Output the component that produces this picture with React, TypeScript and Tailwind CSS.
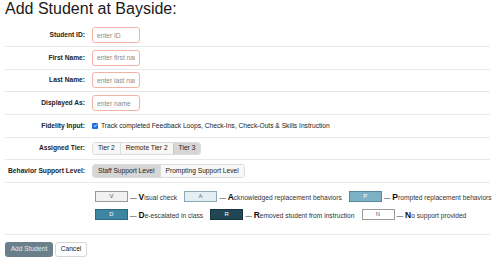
import React from 'react';

const rows = [
  { label: 'Student ID:', placeholder: 'enter ID' },
  { label: 'First Name:', placeholder: 'enter first name' },
  { label: 'Last Name:', placeholder: 'enter last name' },
  { label: 'Displayed As:', placeholder: 'enter name' },
];

const legend = [
  [
    { key: 'V', rest: 'isual check', box: 'bg-[#f1f1f1] border-[#9a9a9a] text-[#555]' },
    { key: 'A', rest: 'cknowledged replacement behaviors', box: 'bg-[#e4eff4] border-[#8ea9b5] text-[#4d7585]' },
    { key: 'P', rest: 'rompted replacement behaviors', box: 'bg-[#7db2c6] border-[#55889c] text-white' },
  ],
  [
    { key: 'D', rest: 'e-escalated in class', box: 'bg-[#3e85a2] border-[#2b6880] text-white' },
    { key: 'R', rest: 'emoved student from instruction', box: 'bg-[#214654] border-[#16323d] text-white' },
    { key: 'N', rest: 'o support provided', box: 'bg-white border-[#9a9a9a] text-[#666]' },
  ],
];

function Row({ label, children }: { label: string; children?: React.ReactNode }) {
  return (
    <div className="flex items-center h-[22.67px] border-b border-[#e8e8e8]">
      <div className="w-[87px] pr-[7px] text-right font-bold text-[#222]">{label}</div>
      <div className="flex items-center">{children}</div>
    </div>
  );
}

export default function App() {
  return (
    <div className="w-[495px] h-[260px] bg-white overflow-hidden font-['Liberation_Sans',Arial,sans-serif] text-[6.67px] text-[#222]">
      <div className="px-[5px]">
        <h1 className="h-[24.33px] pt-[1px] text-[16px] leading-[16px] text-[#1a1a1a]">Add Student at Bayside:</h1>

        {rows.map((r) => (
          <Row key={r.label} label={r.label}>
            <input
              placeholder={r.placeholder}
              className="w-[48px] h-[16px] px-[4px] border border-[#f3b3a4] rounded-[3px] text-[6.67px] outline-none placeholder:text-[#8a8a8a]"
            />
          </Row>
        ))}

        <Row label="Fidelity Input:">
          <span className="w-[6px] h-[6px] rounded-[1px] bg-[#1b6fe0] flex items-center justify-center">
            <svg viewBox="0 0 10 10" className="w-[5px] h-[5px]">
              <path d="M2 5.2 L4.2 7.3 L8 2.8" stroke="white" strokeWidth="1.8" fill="none" />
            </svg>
          </span>
          <span className="ml-[3px]">Track completed Feedback Loops, Check-Ins, Check-Outs &amp; Skills Instruction</span>
        </Row>

        <Row label="Assigned Tier:">
          <div className="flex h-[13px] border border-[#dcdcdc] rounded-[3px] overflow-hidden">
            <span className="px-[5px] flex items-center bg-[#f7f7f7]">Tier 2</span>
            <span className="px-[5px] flex items-center bg-[#f7f7f7] border-l border-[#dcdcdc]">Remote Tier 2</span>
            <span className="px-[5px] flex items-center bg-[#d6d6d6] border-l border-[#c8c8c8]">Tier 3</span>
          </div>
        </Row>

        <Row label="Behavior Support Level:">
          <div className="flex h-[14px] border border-[#dcdcdc] rounded-[3px] overflow-hidden">
            <span className="px-[5px] flex items-center bg-[#d6d6d6]">Staff Support Level</span>
            <span className="px-[5px] flex items-center bg-[#f7f7f7] border-l border-[#dcdcdc]">Prompting Support Level</span>
          </div>
        </Row>

        <div className="h-[52px] border-b border-[#e8e8e8] pt-[8.5px] pl-[90px] flex flex-col gap-[7px]">
          {legend.map((line, i) => (
            <div key={i} className="flex gap-x-[7px] whitespace-nowrap">
              {line.map((l) => (
                <div key={l.key} className="flex items-center h-[11px]">
                  <span className={`w-[33px] h-[11px] border flex items-center justify-center text-[6px] ${l.box}`}>{l.key}</span>
                  <span className="ml-[2px] text-[#333]">
                    — <b className="text-[8.5px] text-[#111]">{l.key}</b>
                    {l.rest}
                  </span>
                </div>
              ))}
            </div>
          ))}
        </div>

        <div className="flex gap-[2px] mt-[7px]">
          <button className="w-[48px] h-[15px] rounded-[3px] bg-[#6a7f89] text-[#e6ecef] text-[6.67px]">Add Student</button>
          <button className="w-[32px] h-[15px] rounded-[3px] bg-white border border-[#d6d6d6] text-[#222] text-[6.67px]">Cancel</button>
        </div>
      </div>
    </div>
  );
}
